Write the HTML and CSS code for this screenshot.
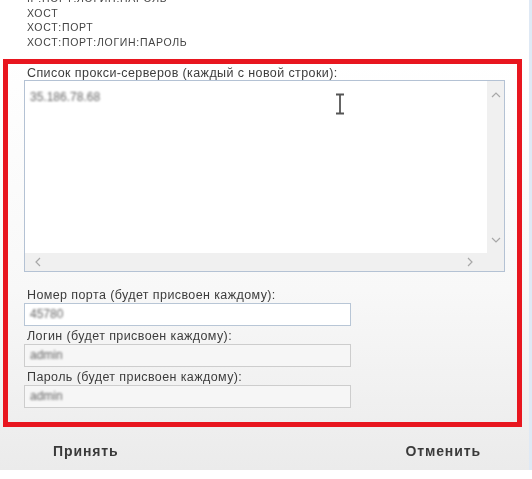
FILE: index.html
```html
<!DOCTYPE html>
<html lang="ru">
<head>
<meta charset="utf-8">
<title>Прокси</title>
<link rel="stylesheet" href="styles.css">
</head>
<body>
<div class="window">
  <div class="hints">
    <div>IP:ПОРТ:ЛОГИН:ПАРОЛЬ</div>
    <div>ХОСТ</div>
    <div>ХОСТ:ПОРТ</div>
    <div>ХОСТ:ПОРТ:ЛОГИН:ПАРОЛЬ</div>
  </div>
  <div class="panel">
    <div class="label">Список прокси-серверов (каждый с новой строки):</div>
    <div class="memo">
      <div class="memo-text"><span class="blur">35.186.78.68</span></div>
      <div class="vscroll">
        <svg class="arrow" width="10" height="6" viewBox="0 0 10 6"><path d="M1 5 L5 1 L9 5" fill="none" stroke="#a8a8a8" stroke-width="1.2"/></svg>
        <svg class="arrow" width="10" height="6" viewBox="0 0 10 6"><path d="M1 1 L5 5 L9 1" fill="none" stroke="#a8a8a8" stroke-width="1.2"/></svg>
      </div>
      <div class="hscroll">
        <svg class="arrow" width="6" height="10" viewBox="0 0 6 10"><path d="M5 1 L1 5 L5 9" fill="none" stroke="#a8a8a8" stroke-width="1.2"/></svg>
        <svg class="arrow" width="6" height="10" viewBox="0 0 6 10"><path d="M1 1 L5 5 L1 9" fill="none" stroke="#a8a8a8" stroke-width="1.2"/></svg>
      </div>
      <div class="corner"></div>
    </div>
    <div class="fields">
      <div class="label field-label">Номер порта (будет присвоен каждому):</div>
      <div class="input input-active"><span class="blur">45780</span></div>
      <div class="label field-label">Логин (будет присвоен каждому):</div>
      <div class="input input-gray"><span class="blur">admin</span></div>
      <div class="label field-label">Пароль (будет присвоен каждому):</div>
      <div class="input input-gray"><span class="blur">admin</span></div>
    </div>
    <svg class="ibeam" width="12" height="22" viewBox="0 0 12 22"><path d="M2 1.5 H10 M6 1.5 V20.5 M2 20.5 H10" fill="none" stroke="#555" stroke-width="1.8"/></svg>
  </div>
  <div class="footer">
    <span class="btn">Принять</span>
    <span class="btn">Отменить</span>
  </div>
</div>
</body>
</html>
```
FILE: styles.css
```css
html, body {
  margin: 0;
  padding: 0;
}
body {
  width: 532px;
  height: 479px;
  overflow: hidden;
  font-family: "Liberation Sans", Arial, sans-serif;
  color: #3a3a3a;
  background: #ffffff;
}
.window {
  position: relative;
  width: 532px;
  height: 479px;
  background: linear-gradient(to bottom, #ffffff 0px, #ffffff 60px, #f8f8f8 300px, #ebebeb 479px);
  border-right: 3px solid #dfe9f5;
  box-sizing: border-box;
}
.hints {
  padding-left: 27px;
  margin-top: -9px;
  font-size: 10.5px;
  line-height: 14.5px;
  letter-spacing: 0.7px;
  color: #444;
  height: 68px;
  filter: blur(0.3px);
}
.panel {
  position: relative;
  margin-left: 3px;
  width: 519px;
  height: 368px;
  box-sizing: border-box;
  border: 5px solid #e8161f;
  padding: 3px 12px 0 16px;
  filter: blur(0.25px);
}
.label {
  font-size: 12.5px;
  line-height: 13px;
  color: #3c3c3c;
  padding-left: 3px;
  letter-spacing: 0.4px;
  white-space: nowrap;
}
.memo {
  width: 481px;
  height: 192px;
  box-sizing: border-box;
  border: 1px solid #b4c2d4;
  background: #fff;
  display: grid;
  grid-template-columns: 1fr 17px;
  grid-template-rows: 1fr 18px;
}
.memo-text {
  padding: 9px 0 0 5px;
  font-size: 12px;
}
.blur {
  color: #666;
  filter: blur(1.2px);
  display: inline-block;
}
.vscroll {
  background: #f0f0f0;
  display: flex;
  flex-direction: column;
  justify-content: space-between;
  align-items: center;
  padding: 11px 0 10px;
}
.hscroll {
  background: #f0f0f0;
  display: flex;
  justify-content: space-between;
  align-items: center;
  padding: 0 14px 0 10px;
}
.corner {
  background: #f0f0f0;
}
.fields {
  margin-top: 17px;
  display: flex;
  flex-direction: column;
  width: 327px;
}
.field-label {
  margin-bottom: 1px;
}
.input {
  height: 23px;
  box-sizing: border-box;
  margin-bottom: 4px;
  padding: 3px 0 0 5px;
  font-size: 12px;
}
.input-active {
  border: 1px solid #b8c6d6;
  background: #fff;
}
.input-gray {
  border: 1px solid #cdcdcd;
  background: #f6f6f6;
}
.ibeam {
  position: absolute;
  left: 326px;
  top: 29px;
}
.footer {
  display: flex;
  justify-content: space-between;
  padding: 16px 48px 0 53px;
  font-size: 14px;
  letter-spacing: 0.9px;
  font-weight: bold;
  color: #3a3a3a;
  filter: blur(0.3px);
}
```
